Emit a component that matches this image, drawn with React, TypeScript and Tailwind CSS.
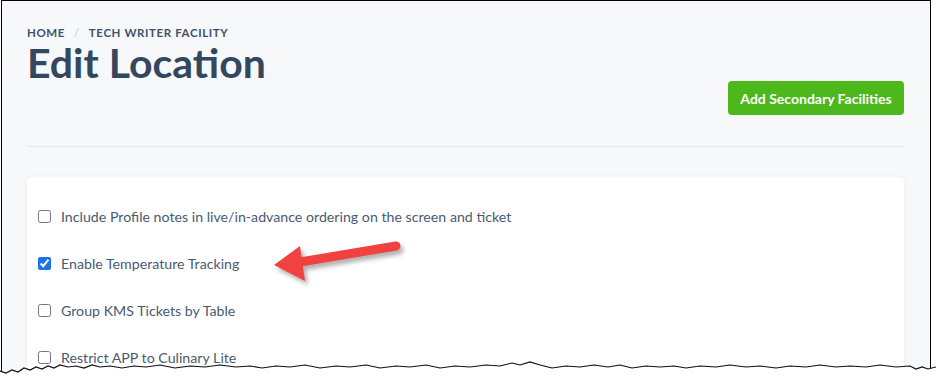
import React from "react";

const rows = [
  { label: "Include Profile notes in live/in-advance ordering on the screen and ticket", checked: false },
  { label: "Enable Temperature Tracking", checked: true },
  { label: "Group KMS Tickets by Table", checked: false },
  { label: "Restrict APP to Culinary Lite", checked: false },
];

function TornEdge() {
  const pts =
    "0,371 6,373 12,370 18,372 24,368 30,370 36,367 42,369 48,366 54,368 60,365 68,367 76,366 84,368 92,365 100,367 110,366 122,368 134,366 146,367 160,365 175,368 190,366 205,367 220,365 236,367 250,366 262,368 276,366 290,367 305,365 320,368 336,366 350,367 366,365 380,368 396,366 410,367 426,365 440,368 455,366 470,367 486,365 500,366 512,363 520,365 530,362 540,365 552,368 566,366 580,367 594,365 608,367 620,365 632,368 646,366 660,367 674,366 686,368 700,366 716,367 730,365 746,367 760,366 776,368 790,366 806,367 820,365 836,367 850,366 866,367 880,365 896,367 910,366 916,369 922,367 928,369 936,367";
  const fill = pts + " 936,380 0,380";
  return (
    <svg className="absolute left-0 top-0" width="936" height="380" viewBox="0 0 936 380">
      <defs>
        <filter id="tshadow" x="-5%" y="-50%" width="110%" height="200%">
          <feGaussianBlur stdDeviation="1.5" />
        </filter>
      </defs>
      <polyline points={pts} transform="translate(0,3)" fill="none" stroke="#9a9a9a" strokeWidth="2" filter="url(#tshadow)" />
      <polygon points={fill} fill="#ffffff" />
      <polyline points={pts} fill="none" stroke="#111" strokeWidth="1.2" />
    </svg>
  );
}

function Arrow() {
  return (
    <svg className="absolute left-0 top-0 pointer-events-none" width="936" height="380" viewBox="0 0 936 380">
      <defs>
        <filter id="ashadow" x="-20%" y="-50%" width="140%" height="200%">
          <feGaussianBlur stdDeviation="2" />
        </filter>
      </defs>
      <g transform="translate(3,4)" filter="url(#ashadow)" opacity="0.45">
        <line x1="396" y1="246" x2="300" y2="262" stroke="#555" strokeWidth="9" strokeLinecap="round" />
        <polygon points="274,265 300,246 305,281" fill="#555" />
      </g>
      <line x1="396" y1="246" x2="300" y2="262" stroke="#f24141" strokeWidth="9" strokeLinecap="round" />
      <polygon points="274,265 300,246 305,281" fill="#f24141" />
    </svg>
  );
}

export default function App() {
  return (
    <div className="relative w-[936px] h-[380px] overflow-hidden bg-white" style={{ fontFamily: "Lato, 'Liberation Sans', sans-serif" }}>
      <div className="ml-[1px] w-[930px] h-[380px] border-l border-r border-t border-black bg-[#f7f8fa] pl-[25px] pr-[26px] pt-[25px]">
        <div className="flex items-start justify-between">
          <div>
            <div className="flex items-center text-[11.5px] font-bold tracking-[0.6px] text-[#3f536b] leading-[14px]">
              <span>HOME</span>
              <span className="mx-[9px] font-normal text-[#c5ccd6]">/</span>
              <span>TECH WRITER FACILITY</span>
            </div>
            <h1 className="mt-[3px] text-[41px] font-bold leading-[40px] text-[#33475f]">Edit Location</h1>
          </div>
          <button className="mt-[55px] h-[34px] w-[176px] rounded-[4px] bg-[#4cb81b] text-[14px] font-bold text-white">
            Add Secondary Facilities
          </button>
        </div>
        <div className="mt-[31px] h-px bg-[#e9ebef]" />
        <div className="mt-[30px] rounded-[5px] bg-white shadow-[0_1px_6px_rgba(0,0,0,0.06)] pl-[11px] pt-[16px] h-[300px]">
          {rows.map((r) => (
            <label key={r.label} className="flex items-center h-[47px] gap-[10px] text-[14.2px] text-[#4a5a70]">
              <input type="checkbox" checked={r.checked} readOnly className="m-0 h-[13px] w-[13px] accent-[#1a73e8]" />
              <span>{r.label}</span>
            </label>
          ))}
        </div>
      </div>
      <Arrow />
      <TornEdge />
    </div>
  );
}
